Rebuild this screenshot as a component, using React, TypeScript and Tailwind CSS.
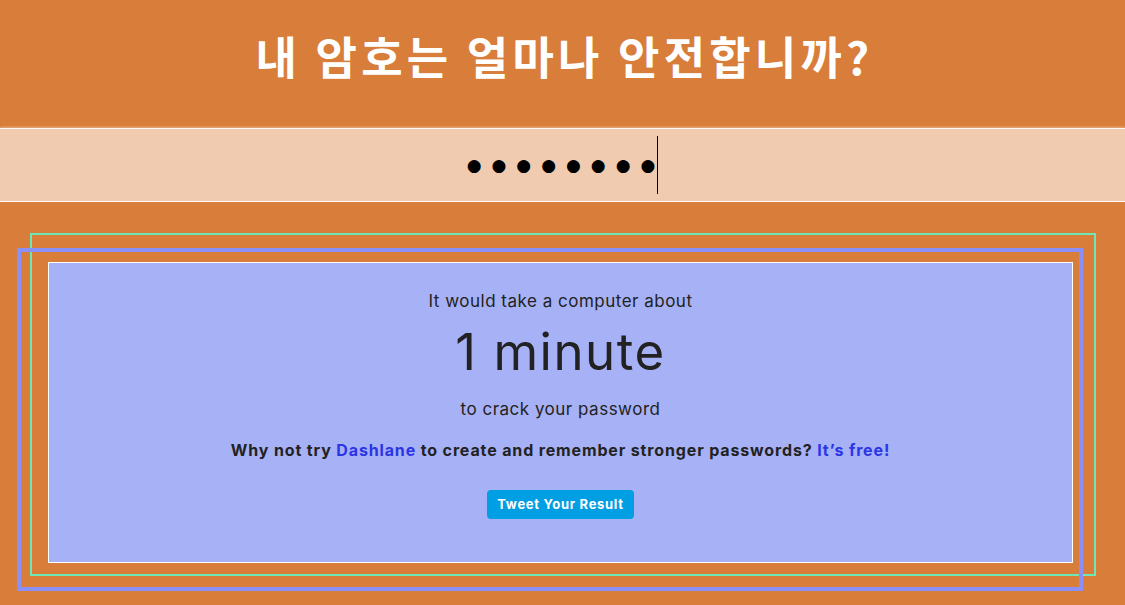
export default function App() {
  return (
    <div className="min-h-[605px] w-full bg-[#d97d3a] font-['Inter',sans-serif] text-[#222]">
      <header className="flex h-[128px] items-start justify-center pt-[26px]">
        <h1 className="pl-[4px] font-['Noto_Sans_CJK_KR','Noto_Sans',sans-serif] text-[45px] font-bold leading-[60px] tracking-[4.2px] text-white">
          내 암호는 얼마나 안전합니까?
        </h1>
      </header>

      <div className="flex h-[74px] items-center justify-center border-y border-white/90 bg-[#f0cbb0] shadow-[0_-1px_2px_rgba(255,255,255,0.4)]">
        <div className="flex items-center">
          <span className="font-['DejaVu_Sans',sans-serif] text-[17px] leading-none tracking-[10px] text-black">
            ●●●●●●●●
          </span>
          <span className="ml-[-8px] block h-[58px] w-px bg-black" />
        </div>
      </div>

      <div className="flex justify-start pl-[48px] pt-[60px]">
        <div className="relative">
          <div className="pointer-events-none absolute left-[-18px] top-[-29px] h-[343px] w-[1066px] border-2 border-[#6ee7b7]" />
          <div className="pointer-events-none absolute left-[-31px] top-[-14px] h-[343px] w-[1066px] border-4 border-[#8b90f7]" />
          <div className="relative flex h-[301px] w-[1025px] flex-col items-center border border-white bg-[#a7b1f5] pt-[26px] text-center">
            <p className="text-[17px] leading-[24px] tracking-[0.5px]">It would take a computer about</p>
            <p className="mt-[9px] text-[51px] font-normal leading-[60px] tracking-[1.5px]">1 minute</p>
            <p className="mt-[15px] text-[17px] leading-[24px] tracking-[0.5px]">to crack your password</p>
            <p className="mt-[17px] text-[16px] font-bold leading-[24px] tracking-[0.86px]">
              Why not try <a className="text-[#2b35e6]">Dashlane</a> to create and remember stronger
              passwords? <a className="text-[#2b35e6]">It&rsquo;s free!</a>
            </p>
            <button className="mt-[28px] h-[29px] w-[147px] rounded-[4px] bg-[#009ee2] text-[13px] font-bold tracking-[0.7px] text-white">
              Tweet Your Result
            </button>
          </div>
        </div>
      </div>
    </div>
  );
}
